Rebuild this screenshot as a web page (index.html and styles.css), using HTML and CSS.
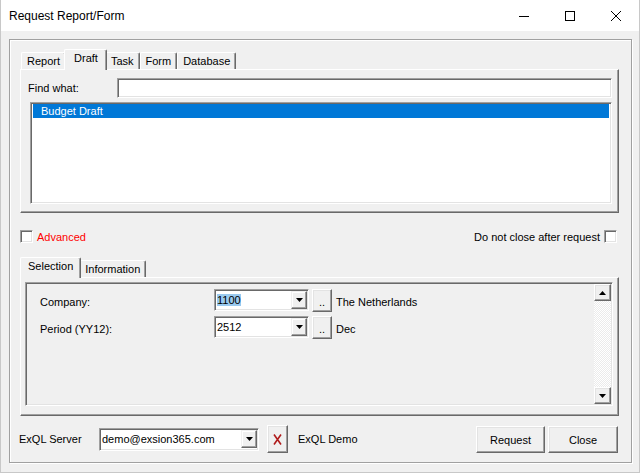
FILE: index.html
```html
<!DOCTYPE html>
<html lang="en">
<head>
  <meta charset="UTF-8">
  <title>Request Report/Form</title>
  <link rel="stylesheet" href="styles.css">
</head>
<body>
  <div class="window">
    <!-- Title bar -->
    <div class="titlebar">
      <span class="title">Request Report/Form</span>
      <div class="controls">
        <span class="ctl">
          <svg width="10" height="10" viewBox="0 0 10 10"><line x1="0" y1="5.5" x2="10" y2="5.5" stroke="#000" stroke-width="1"/></svg>
        </span>
        <span class="ctl">
          <svg width="10" height="10" viewBox="0 0 10 10"><rect x="0.5" y="0.5" width="9" height="9" fill="none" stroke="#000" stroke-width="1"/></svg>
        </span>
        <span class="ctl">
          <svg width="10" height="10" viewBox="0 0 10 10"><path d="M0 0 L10 10 M10 0 L0 10" stroke="#000" stroke-width="1"/></svg>
        </span>
      </div>
    </div>

    <div class="frame">
      <!-- Upper tabs -->
      <div class="tabs">
        <div class="tab">Report</div>
        <div class="tab active tab-draft">Draft</div>
        <div class="tab">Task</div>
        <div class="tab">Form</div>
        <div class="tab">Database</div>
      </div>
      <div class="panel panel-draft">
        <div class="find-row">
          <span class="find-label">Find what:</span>
          <div class="input sunken"></div>
        </div>
        <div class="list sunken">
          <div class="list-item selected">Budget Draft</div>
        </div>
      </div>

      <!-- Options -->
      <div class="options">
        <div class="check">
          <span class="box"></span>
          <span class="advanced">Advanced</span>
        </div>
        <div class="check">
          <span>Do not close after request</span>
          <span class="box"></span>
        </div>
      </div>

      <!-- Lower tabs -->
      <div class="tabs">
        <div class="tab active">Selection</div>
        <div class="tab">Information</div>
      </div>
      <div class="panel panel-sel">
        <div class="sel-box">
          <div class="fields">
            <div class="field-row">
              <span class="field-label">Company:</span>
              <div class="combo">
                <span class="combo-text"><span class="hl">1100</span></span>
                <span class="combo-btn">
                  <svg width="7" height="4" viewBox="0 0 7 4"><polygon points="0,0 7,0 3.5,4" fill="#000"/></svg>
                </span>
              </div>
              <span class="btn dots">..</span>
              <span class="field-desc">The Netherlands</span>
            </div>
            <div class="field-row">
              <span class="field-label">Period (YY12):</span>
              <div class="combo">
                <span class="combo-text">2512</span>
                <span class="combo-btn">
                  <svg width="7" height="4" viewBox="0 0 7 4"><polygon points="0,0 7,0 3.5,4" fill="#000"/></svg>
                </span>
              </div>
              <span class="btn dots">..</span>
              <span class="field-desc">Dec</span>
            </div>
          </div>
          <div class="vscroll">
            <span class="btn sb-btn">
              <svg width="7" height="4" viewBox="0 0 7 4"><polygon points="0,4 7,4 3.5,0" fill="#000"/></svg>
            </span>
            <span class="sb-track"></span>
            <span class="btn sb-btn">
              <svg width="7" height="4" viewBox="0 0 7 4"><polygon points="0,0 7,0 3.5,4" fill="#000"/></svg>
            </span>
          </div>
        </div>
      </div>

      <!-- Footer -->
      <div class="footer">
        <span class="server-label">ExQL Server</span>
        <div class="combo combo-server">
          <span class="combo-text">demo@exsion365.com</span>
          <span class="combo-btn">
            <svg width="7" height="4" viewBox="0 0 7 4"><polygon points="0,0 7,0 3.5,4" fill="#000"/></svg>
          </span>
        </div>
        <span class="btn x-btn">
          <svg width="9" height="11" viewBox="0 0 9 11"><path d="M1 0.5 L8 10.5 M8 0.5 L1 10.5" stroke="#b01c1c" stroke-width="1.6"/></svg>
        </span>
        <span class="server-name">ExQL Demo</span>
        <div class="actions">
          <span class="btn action">Request</span>
          <span class="btn action action-close">Close</span>
        </div>
      </div>
    </div>
  </div>
</body>
</html>
```

FILE: styles.css
```css
body {
  margin: 0;
  background: #ffffff;
  font-family: "Liberation Sans", Arial, sans-serif;
  font-size: 11px;
  color: #000000;
}
.window {
  width: 638px;
  height: 472px;
  background: #f0f0f0;
  border: 1px solid #c8c8c8;
  border-top: 0;
}

/* Title bar */
.titlebar {
  height: 31px;
  background: #ffffff;
  display: flex;
  align-items: center;
  justify-content: space-between;
}
.title {
  padding-left: 8px;
  font-size: 12px;
}
.controls {
  display: flex;
  height: 31px;
}
.ctl {
  width: 46px;
  display: flex;
  align-items: center;
  justify-content: center;
}

/* Outer etched frame */
.frame {
  margin: 8px 0 0 8px;
  width: 599px;
  height: 404px;
  padding: 9px 12px 9px 10px;
  border: 1px solid #a0a0a0;
  box-shadow: inset 1px 1px #ffffff, 1px 1px #ffffff;
}

/* Tabs */
.tabs {
  display: flex;
  align-items: flex-end;
  height: 20px;
  padding-left: 1px;
}
.tab {
  height: 16px;
  line-height: 16px;
  padding: 0 5px;
  border: 1px solid #ffffff;
  border-bottom: 0;
  border-right-color: #696969;
  box-shadow: inset -1px 0 #a0a0a0;
  border-radius: 2px 2px 0 0;
  background: #f0f0f0;
}
.tab.active {
  position: relative;
  z-index: 2;
  height: 20px;
  margin: 0 -2px -1px;
  padding: 0 7px;
}
.tab.active:first-child {
  margin-left: -1px;
}
.tab.tab-draft {
  padding: 0 8px 0 9px;
}

/* Tab panels */
.panel {
  border: 1px solid #ffffff;
  border-right-color: #696969;
  border-bottom-color: #696969;
  box-shadow: inset -1px -1px #a0a0a0;
}
.panel-draft {
  padding: 8px 6px 8px 7px;
}
.panel-sel {
  padding: 4px 5px 9px 4px;
}

.sunken {
  border: 1px solid;
  border-color: #a0a0a0 #ffffff #ffffff #a0a0a0;
  box-shadow: inset 1px 1px #696969, inset -1px -1px #e3e3e3;
  background: #ffffff;
}
.btn {
  border: 1px solid;
  border-color: #ffffff #696969 #696969 #ffffff;
  box-shadow: inset -1px -1px #a0a0a0, inset 1px 1px #e3e3e3;
  background: #f0f0f0;
  display: flex;
  align-items: center;
  justify-content: center;
  box-sizing: border-box;
}

.find-row {
  display: flex;
  align-items: center;
  height: 20px;
}
.find-label {
  width: 89px;
}
.input {
  flex: 1;
  height: 18px;
}
.list {
  margin: 4px 0 0 2px;
  padding: 1px 2px;
  box-sizing: border-box;
  height: 102px;
}
.list-item {
  height: 14px;
  line-height: 14px;
  padding-left: 8px;
}
.list-item.selected {
  background: #0078d7;
  color: #ffffff;
}

/* Checkbox row */
.options {
  display: flex;
  justify-content: space-between;
  align-items: center;
  height: 13px;
  margin: 17px 2px 14px 0;
}
.check {
  display: flex;
  align-items: center;
  gap: 4px;
}
.check .box {
  width: 11px;
  height: 11px;
  border: 1px solid;
  border-color: #a0a0a0 #ffffff #ffffff #a0a0a0;
  box-shadow: inset 1px 1px #696969, inset -1px -1px #e3e3e3;
  background: #ffffff;
}
.advanced {
  color: #ff0000;
}

/* Selection box */
.sel-box {
  height: 120px;
  display: flex;
  border: 1px solid;
  border-color: #a0a0a0 #ffffff #ffffff #a0a0a0;
  box-shadow: inset 1px 1px #696969, inset -1px -1px #e3e3e3;
  padding: 1px;
}
.fields {
  flex: 1;
  padding: 5px 0 0 13px;
  display: flex;
  flex-direction: column;
  gap: 4px;
}
.field-row {
  display: flex;
  align-items: center;
  height: 23px;
}
.field-label {
  width: 174px;
  padding-top: 2px;
}
.combo {
  width: 91px;
  height: 18px;
  align-self: flex-start;
  display: flex;
  align-items: center;
  border: 1px solid;
  border-color: #a0a0a0 #ffffff #ffffff #a0a0a0;
  box-shadow: inset 1px 1px #696969, inset -1px -1px #e3e3e3;
  background: #ffffff;
  padding: 1px;
}
.combo-text {
  flex: 1;
  padding-left: 1px;
  line-height: 16px;
  white-space: nowrap;
  overflow: hidden;
}
.hl {
  background: #99c9ef;
}
.combo-btn {
  width: 16px;
  height: 18px;
  border: 1px solid;
  border-color: #f0f0f0 #696969 #696969 #f0f0f0;
  box-shadow: inset -1px -1px #a0a0a0, inset 1px 1px #ffffff;
  background: #f0f0f0;
  box-sizing: border-box;
  display: flex;
  align-items: center;
  justify-content: center;
}
.dots {
  width: 20px;
  height: 23px;
  margin-left: 3px;
  align-items: flex-end;
  padding-bottom: 3px;
  line-height: 11px;
}
.field-desc {
  margin-left: 4px;
  padding-top: 2px;
}

.vscroll {
  width: 17px;
  display: flex;
  flex-direction: column;
}
.sb-btn {
  width: 17px;
  height: 17px;
}
.sb-track {
  flex: 1;
  background: repeating-conic-gradient(#ffffff 0 25%, #ebebeb 0 50%) 0 0 / 2px 2px;
}

/* Footer */
.footer {
  display: flex;
  align-items: center;
  height: 28px;
  margin-top: 9px;
}
.server-label {
  width: 80px;
  margin-left: -1px;
}
.combo-server {
  width: 156px;
  height: 19px;
  align-self: center;
}
.x-btn {
  width: 21px;
  height: 28px;
  margin-left: 8px;
}
.server-name {
  margin-left: 10px;
}
.actions {
  margin-left: auto;
  margin-right: 1px;
  display: flex;
  gap: 3px;
}
.action {
  width: 69px;
  height: 27px;
  margin-top: 1px;
}
.action-close {
  width: 70px;
}
```
